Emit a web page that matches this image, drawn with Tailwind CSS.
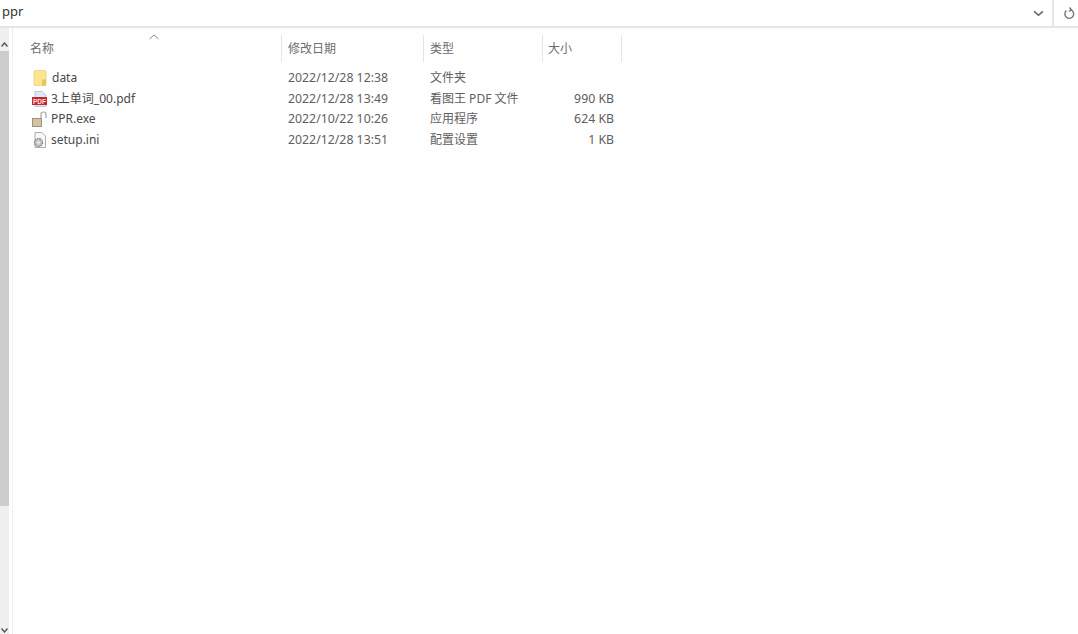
<!DOCTYPE html>
<html lang="en">

<head>
    <meta charset="UTF-8">
    <meta name="viewport" content="width=device-width, initial-scale=1.0">
    <script src="https://cdn.jsdelivr.net/npm/@tailwindcss/browser@4"></script>
    <title>ppr</title>
</head>

<body class="bg-[#fefefe] overflow-hidden">
    <div class="flex flex-col h-[634px] w-[1078px] font-['Noto_Sans','Noto_Sans_CJK_SC',sans-serif] text-[12px] text-[#5f5f5f]">
        <!-- address bar -->
        <div class="flex items-center h-[28px] shrink-0 bg-white border-b-2 border-[#e6e6e6]">
            <div class="flex-1 pl-[2px] pb-[2px] text-[13px] text-[#333]">ppr</div>
            <div class="flex items-center justify-center w-[27px] h-full">
                <svg width="11" height="7" viewBox="0 0 12 8" fill="none" stroke="#666" stroke-width="1.8"><path d="M1 1.5 L6 6 L11 1.5"/></svg>
            </div>
            <div class="flex items-center justify-center w-[26px] h-full border-l-2 border-[#e6e6e6] pl-[5px]">
                <svg width="12" height="13" viewBox="0 0 12 13" fill="none" stroke="#777" stroke-width="1.4"><path d="M3.4 3.6 A4.4 4.4 0 1 0 7 2.6"/><path d="M6.4 0.6 L8.4 2.6 L6.2 4.4"/></svg>
            </div>
        </div>

        <div class="flex flex-1 min-h-0">
            <!-- scrollbar -->
            <div class="flex flex-col w-[9px] shrink-0 bg-[#f0f0f0]">
                <div class="flex items-end justify-center h-[23px] pb-[4px]">
                    <svg width="7" height="5" viewBox="0 0 7 5" fill="none" stroke="#555" stroke-width="1.4"><path d="M0.5 4.5 L3.5 1 L6.5 4.5"/></svg>
                </div>
                <div class="h-[455px] bg-[#cdcdcd]"></div>
                <div class="flex flex-1 items-end justify-center pb-[1px]">
                    <svg width="7" height="5" viewBox="0 0 7 5" fill="none" stroke="#555" stroke-width="1.4"><path d="M0.5 0.5 L3.5 4 L6.5 0.5"/></svg>
                </div>
            </div>

            <!-- file list -->
            <div class="flex-1 ml-[3px] border-l border-dotted border-[#e2e2e2]">
                <div class="relative flex h-[27px] mt-[7px] text-[#6d6d6d]">
                    <svg class="absolute left-[136px] top-[-1px]" width="10" height="6" viewBox="0 0 10 6" fill="none" stroke="#888" stroke-width="1"><path d="M0.5 5 L5 1 L9.5 5"/></svg>
                    <div class="flex items-center w-[269px] pl-[17px] border-r border-[#e5e5e5]">名称</div>
                    <div class="flex items-center w-[142px] pl-[6px] border-r border-[#e5e5e5]">修改日期</div>
                    <div class="flex items-center w-[119px] pl-[6px] border-r border-[#e5e5e5]">类型</div>
                    <div class="flex items-center w-[79px] pl-[5px] border-r border-[#e5e5e5]">大小</div>
                </div>

                <div class="flex flex-col mt-[6px]">
                    <div class="flex items-center h-[20.6px]">
                        <div class="flex items-center w-[269px] pl-[19px] text-[#4a4a4a]">
                            <svg class="mr-[5px]" width="15" height="16" viewBox="0 0 15 16"><path d="M2 1.5 Q2 0.5 3 0.5 H12 Q14 0.5 14 2 V15.5 H3 Q2 15.5 2 14.5 Z" fill="#fde48f" stroke="#ecd07c" stroke-width="0.8"/><rect x="10" y="9.5" width="4" height="6" fill="#e8c45e"/></svg>
                            <span>data</span>
                        </div>
                        <div class="w-[142px] pl-[6px] text-[12.3px]">2022/12/28 12:38</div>
                        <div class="w-[119px] pl-[6px]">文件夹</div>
                        <div class="w-[71px] text-right text-[12.3px]"></div>
                    </div>
                    <div class="flex items-center h-[20.6px]">
                        <div class="flex items-center w-[269px] pl-[19px] text-[#4a4a4a]">
                            <svg class="mr-[4px]" width="15" height="16" viewBox="0 0 15 16"><path d="M3 0.5 H10 L14 4 V15.5 H3 Z" fill="#dfeaf7" stroke="#a9bfd8" stroke-width="0.8"/><rect x="0" y="6" width="15" height="8" fill="#c62828"/><text x="7.5" y="12.6" text-anchor="middle" font-family="Liberation Sans" font-weight="700" font-size="6.5" fill="#f8e4e4">PDF</text></svg>
                            <span>3上单词_00.pdf</span>
                        </div>
                        <div class="w-[142px] pl-[6px] text-[12.3px]">2022/12/28 13:49</div>
                        <div class="w-[119px] pl-[6px]">看图王 PDF 文件</div>
                        <div class="w-[71px] text-right text-[12.3px]">990 KB</div>
                    </div>
                    <div class="flex items-center h-[20.6px]">
                        <div class="flex items-center w-[269px] pl-[19px] text-[#4a4a4a]">
                            <svg class="mr-[4px]" width="15" height="16" viewBox="0 0 15 16" fill="none"><rect x="0.5" y="7.5" width="9" height="8" fill="#d9c199" stroke="#8c8c8c" stroke-width="0.9"/><path d="M9 7 V3 Q9 1 11.5 1 Q14 1 14 3 V7" stroke="#a5a5a5" stroke-width="1.2"/></svg>
                            <span>PPR.exe</span>
                        </div>
                        <div class="w-[142px] pl-[6px] text-[12.3px]">2022/10/22 10:26</div>
                        <div class="w-[119px] pl-[6px]">应用程序</div>
                        <div class="w-[71px] text-right text-[12.3px]">624 KB</div>
                    </div>
                    <div class="flex items-center h-[20.6px]">
                        <div class="flex items-center w-[269px] pl-[19px] text-[#4a4a4a]">
                            <svg class="mr-[4px]" width="15" height="16" viewBox="0 0 15 16" fill="none"><path d="M3 0.5 H10 L13.5 4 V15.5 H3 Z" fill="#f7f7f7" stroke="#9c9c9c" stroke-width="0.8"/><circle cx="6.5" cy="10.5" r="4" fill="#c6c6c6" stroke="#7d7d7d" stroke-width="1.2" stroke-dasharray="1.6 0.8"/><circle cx="6.5" cy="10.5" r="1.3" fill="#f0f0f0"/></svg>
                            <span>setup.ini</span>
                        </div>
                        <div class="w-[142px] pl-[6px] text-[12.3px]">2022/12/28 13:51</div>
                        <div class="w-[119px] pl-[6px]">配置设置</div>
                        <div class="w-[71px] text-right text-[12.3px]">1 KB</div>
                    </div>
                </div>
            </div>
        </div>
    </div>
</body>

</html>
